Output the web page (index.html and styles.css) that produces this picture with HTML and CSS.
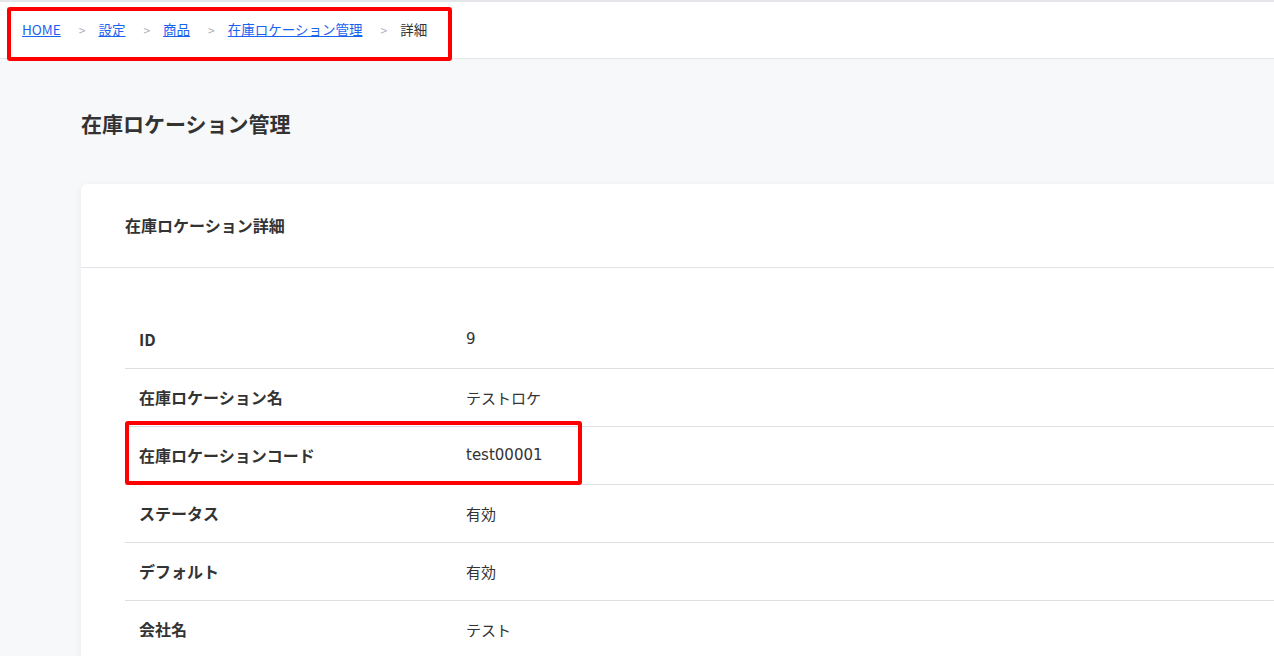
FILE: index.html
```html
<!DOCTYPE html>
<html lang="ja">
  <head>
    <meta charset="UTF-8" />
    <meta name="viewport" content="width=device-width, initial-scale=1.0" />
    <title>在庫ロケーション管理 詳細</title>
    <link rel="stylesheet" href="styles.css">
  </head>
  <body>
    <!-- =========== breadcrumb ========= -->
    <header class="topbar">
      <nav class="breadcrumb">
        <a href="#">HOME</a>
        <span class="sep">&gt;</span>
        <a href="#">設定</a>
        <span class="sep">&gt;</span>
        <a href="#">商品</a>
        <span class="sep">&gt;</span>
        <a href="#">在庫ロケーション管理</a>
        <span class="sep">&gt;</span>
        <span class="current">詳細</span>
      </nav>
      <div class="mark mark-crumb"></div>
    </header>

    <!-- =========== content ========= -->
    <main class="content">
      <h1 class="page-title">在庫ロケーション管理</h1>

      <section class="card">
        <div class="card-head">在庫ロケーション詳細</div>
        <div class="card-body">
          <table class="detail">
            <tr>
              <th>ID</th>
              <td>9</td>
            </tr>
            <tr>
              <th>在庫ロケーション名</th>
              <td>テストロケ</td>
            </tr>
            <tr class="marked">
              <th>在庫ロケーションコード</th>
              <td>test00001<div class="mark mark-row"></div></td>
            </tr>
            <tr>
              <th>ステータス</th>
              <td>有効</td>
            </tr>
            <tr>
              <th>デフォルト</th>
              <td>有効</td>
            </tr>
            <tr>
              <th>会社名</th>
              <td>テスト</td>
            </tr>
          </table>
        </div>
      </section>
    </main>
  </body>
</html>
```

FILE: styles.css
```css
* {
  margin: 0;
  padding: 0;
  box-sizing: border-box;
}

html,
body {
  height: 100%;
  overflow: hidden;
}

body {
  background-color: #f7f8fa;
  color: #333;
  font-family: "Noto Sans CJK JP", "Noto Sans", sans-serif;
}

/* ============== top bar ============== */
.topbar {
  position: relative;
  background: #fff;
  border-top: 2px solid #e4e5e8;
  border-bottom: 1px solid #e4e5e8;
  height: 59px;
}

.breadcrumb {
  display: flex;
  align-items: center;
  height: 54px;
  padding-left: 22px;
  font-size: 13.5px;
}

.breadcrumb a {
  color: #1a62f0;
  text-decoration: underline;
}

.breadcrumb .sep {
  color: #aab0bd;
  margin: 0 13px 0 18px;
  font-size: 12px;
}

.breadcrumb .current {
  color: #333;
}

/* red marks drawn over the screenshot */
.mark {
  position: absolute;
  border: 4px solid #ff0000;
  border-radius: 3px;
  pointer-events: none;
}

.mark-crumb {
  left: 7px;
  top: 5px;
  width: 445px;
  height: 54px;
}

/* ============== content ============== */
.content {
  padding: 49px 0 0 81px;
}

.page-title {
  font-size: 21px;
  font-weight: bold;
  color: #333;
  line-height: 30px;
  margin-bottom: 46px;
}

.card {
  background: #fff;
  border-radius: 6px;
  box-shadow: 0 2px 8px rgba(30, 40, 60, 0.06);
  width: calc(100% + 20px);
}

.card-head {
  height: 84px;
  padding: 0 44px 2px;
  display: flex;
  align-items: center;
  font-size: 16px;
  font-weight: bold;
  border-bottom: 1px solid #e2e3e6;
}

.card-body {
  padding: 42px 0 40px 44px;
}

.detail {
  width: 100%;
  border-collapse: collapse;
  font-size: 16px;
}

.detail tr {
  border-bottom: 1px solid #dedfe2;
}

.detail th,
.detail td {
  height: 58px;
  padding: 0 14px;
  text-align: left;
  vertical-align: middle;
}

.detail th {
  width: 327px;
  font-weight: bold;
  color: #333;
}

.detail td {
  position: relative;
  color: #333;
  font-family: "DejaVu Sans", "Noto Sans CJK JP", sans-serif;
  font-size: 15px;
}

.mark-row {
  left: -327px;
  top: -6px;
  width: 457px;
  height: 64px;
}
```
